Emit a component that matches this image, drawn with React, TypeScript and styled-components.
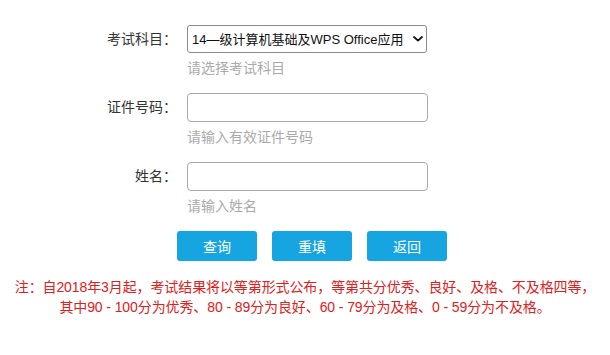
import React, { useState } from 'react';
import styled, { createGlobalStyle } from 'styled-components';

const FONT = `"Liberation Sans", "Noto Sans CJK SC", sans-serif`;

const GlobalStyle = createGlobalStyle`
  html, body {
    margin: 0;
    padding: 0;
    background: #fff;
    font-family: ${FONT};
    font-size: 14px;
    color: #333;
  }
`;

const fields = [
  { key: 'subject', label: '考试科目：', hint: '请选择考试科目', type: 'select' },
  { key: 'idno', label: '证件号码：', hint: '请输入有效证件号码', type: 'input' },
  { key: 'name', label: '姓名：', hint: '请输入姓名', type: 'input' },
];

const Chevron = () => (
  <ChevronIcon viewBox="0 0 10 6" width="10" height="6">
    <path d="M1 1 L5 4.6 L9 1" fill="none" stroke="#111" strokeWidth="1.8" strokeLinecap="round" strokeLinejoin="round" />
  </ChevronIcon>
);

export default function App() {
  const [subject, setSubject] = useState('14');
  const [values, setValues] = useState<Record<string, string>>({ idno: '', name: '' });

  const reset = () => {
    setSubject('14');
    setValues({ idno: '', name: '' });
  };

  return (
    <>
      <GlobalStyle />
      <Page>
        <Form>
          {fields.map((f) => (
            <Row key={f.key}>
              <Label>{f.label}</Label>
              <Field>
                {f.type === 'select' ? (
                  <SelectWrap>
                    <Select value={subject} onChange={(e) => setSubject(e.target.value)}>
                      <option value="14">14—级计算机基础及WPS Office应用</option>
                      <option value="15">15—级计算机基础及MS Office应用</option>
                      <option value="16">16—级计算机基础及Photoshop应用</option>
                    </Select>
                    <Chevron />
                  </SelectWrap>
                ) : (
                  <Input
                    value={values[f.key]}
                    onChange={(e) => setValues({ ...values, [f.key]: e.target.value })}
                  />
                )}
                <Hint>{f.hint}</Hint>
              </Field>
            </Row>
          ))}
          <Buttons>
            <Button type="button">查询</Button>
            <Button type="button" onClick={reset}>重填</Button>
            <Button type="button">返回</Button>
          </Buttons>
        </Form>
        <Note>
          注：自2018年3月起，考试结果将以等第形式公布，等第共分优秀、良好、及格、不及格四等，
          <br />
          其中90 - 100分为优秀、80 - 89分为良好、60 - 79分为及格、0 - 59分为不及格。
        </Note>
      </Page>
    </>
  );
}

const Page = styled.div`
  width: 610px;
  padding-top: 25px;
`;

const Form = styled.div`
  display: flex;
  flex-direction: column;
`;

const Row = styled.div`
  display: flex;
  align-items: flex-start;
  gap: 10px;
  margin-bottom: 15px;
`;

const Label = styled.div`
  width: 177px;
  height: 28px;
  line-height: 28px;
  text-align: right;
  color: #333;
  font-size: 14px;
`;

const Field = styled.div`
  display: flex;
  flex-direction: column;
  width: 241px;
`;

const SelectWrap = styled.div`
  position: relative;
  width: 240px;
  height: 28px;
`;

const Select = styled.select`
  appearance: none;
  box-sizing: border-box;
  width: 240px;
  height: 28px;
  padding: 0 14px 0 4px;
  border: 1px solid #8a8a8a;
  border-radius: 3px;
  font-family: ${FONT};
  font-size: 13px;
  color: #111;
  background: #fff;
  outline: none;
`;

const ChevronIcon = styled.svg`
  position: absolute;
  right: 4px;
  top: 11px;
  pointer-events: none;
`;

const Input = styled.input`
  box-sizing: border-box;
  width: 241px;
  height: 29px;
  padding: 0 6px;
  border: 1px solid #a9a9a9;
  border-radius: 4px;
  font-family: ${FONT};
  font-size: 14px;
  outline: none;
`;

const Hint = styled.div`
  margin-top: 5px;
  line-height: 20px;
  color: #aaa;
  font-size: 14px;
`;

const Buttons = styled.div`
  display: flex;
  gap: 15px;
  padding-left: 177px;
`;

const Button = styled.button`
  width: 80px;
  height: 30px;
  border: none;
  border-radius: 3px;
  background: #17a5e1;
  color: #fff;
  font-family: ${FONT};
  font-size: 14px;
  cursor: pointer;
`;

const Note = styled.p`
  margin: 16px 0 0;
  text-align: center;
  line-height: 20px;
  font-size: 14px;
  letter-spacing: -0.1px;
  color: #e02020;
`;
